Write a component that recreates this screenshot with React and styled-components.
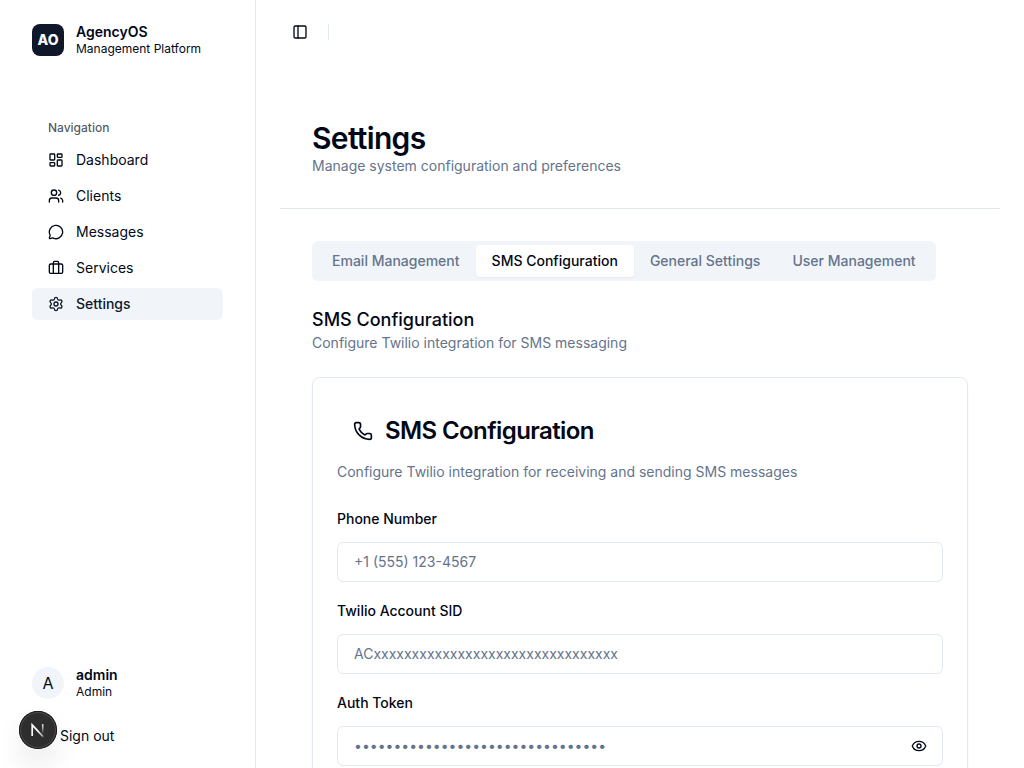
import React from "react";
import styled, { createGlobalStyle } from "styled-components";
import {
  Briefcase,
  Eye,
  LayoutDashboard,
  MessageCircle,
  PanelLeft,
  Phone,
  Settings,
  Users,
} from "lucide-react";

const color = {
  fg: "#020817",
  muted: "#64748b",
  border: "#e2e8f0",
  subtle: "#f1f5f9",
  primary: "#0f172a",
};

const GlobalStyle = createGlobalStyle`
  *, *::before, *::after { box-sizing: border-box; }
  body {
    margin: 0;
    background: #fff;
    color: ${color.fg};
    font-family: Inter, "Liberation Sans", sans-serif;
    font-size: 16px;
    line-height: 24px;
  }
  h1, h2, h3, p { margin: 0; }
  svg { display: block; flex: none; }
  button { font: inherit; color: inherit; background: none; border: 0; padding: 0; }
`;

const Shell = styled.div`
  display: flex;
  height: 100vh;
  overflow: hidden;
`;

const Sidebar = styled.aside`
  flex: 0 0 256px;
  display: flex;
  flex-direction: column;
  border-right: 1px solid ${color.border};
`;

const Identity = styled.div`
  display: flex;
  align-items: center;
  gap: 12px;
`;

const Brand = styled(Identity)`
  padding: 24px 32px 0;
`;

const Logo = styled.div`
  width: 32px;
  height: 32px;
  display: grid;
  place-items: center;
  border-radius: 8px;
  background: ${color.primary};
  color: #f8fafc;
  font-size: 14px;
  line-height: 20px;
  font-weight: 800;
`;

const Avatar = styled.div`
  width: 32px;
  height: 32px;
  display: grid;
  place-items: center;
  border-radius: 50%;
  background: ${color.subtle};
  font-size: 16px;
`;

const Names = styled.div`
  display: flex;
  flex-direction: column;
`;

const Name = styled.span`
  font-size: 14px;
  line-height: 16px;
  font-weight: 600;
`;

const Role = styled.span`
  font-size: 12px;
  line-height: 16px;
  padding-top: 1px;
  margin-bottom: -1px;
`;

const Nav = styled.nav`
  display: flex;
  flex-direction: column;
  gap: 4px;
  padding: 56px 32px 0;
`;

const NavLabel = styled.div`
  height: 32px;
  margin-bottom: -4px;
  padding: 0 16px;
  display: flex;
  align-items: center;
  font-size: 12px;
  font-weight: 500;
  color: rgba(2, 8, 23, 0.7);
`;

const NavItem = styled.a`
  height: 32px;
  padding: 0 16px;
  display: flex;
  align-items: center;
  gap: 12px;
  border-radius: 6px;
  font-size: 14px;
  font-weight: ${(p) => (p.$active ? 500 : 400)};
  color: ${(p) => (p.$active ? color.primary : color.fg)};
  background: ${(p) => (p.$active ? color.subtle : "transparent")};
`;

const SidebarFooter = styled.div`
  margin-top: auto;
  padding: 0 32px 16px;
  display: flex;
  flex-direction: column;
  gap: 20.6px;
`;

const SignOut = styled.button`
  height: 32px;
  padding-left: 28px;
  text-align: left;
  font-size: 14px;
`;

const DevBadge = styled.div`
  position: fixed;
  left: 19px;
  bottom: 19px;
  width: 38px;
  height: 38px;
  display: grid;
  place-items: center;
  border-radius: 50%;
  background: #2e2e2e;
  box-shadow: 0 0 0 1px #171717 inset, 0 0 0 2px rgba(255, 255, 255, 0.14) inset,
    0 16px 32px -8px rgba(0, 0, 0, 0.24);
`;

const Main = styled.main`
  flex: 1;
  min-width: 0;
  padding: 0 24px;
`;

const TopBar = styled.header`
  height: 64px;
  display: flex;
  align-items: center;
  padding-left: 12px;
  gap: 20px;
`;

const Divider = styled.span`
  width: 1px;
  height: 16px;
  background: ${color.border};
`;

const PageHeader = styled.div`
  height: 145px;
  padding: 56px 32px 0;
  border-bottom: 1px solid ${color.border};
`;

const PageTitle = styled.h1`
  font-size: 30px;
  line-height: 36px;
  font-weight: 600;
  letter-spacing: -0.68px;
`;

const Muted = styled.p`
  font-size: 14px;
  line-height: 20px;
  color: ${color.muted};
`;

const Body = styled.div`
  padding: 32px;
`;

const Tabs = styled.div`
  display: inline-flex;
  height: 40px;
  padding: 4px;
  border-radius: 6px;
  background: ${color.subtle};
  vertical-align: top;
`;

const Tab = styled.button`
  padding: 0 16.06px;
  border-radius: 4px;
  font-size: 14px;
  font-weight: 500;
  white-space: nowrap;
  color: ${(p) => (p.$active ? color.fg : color.muted)};
  background: ${(p) => (p.$active ? "#fff" : "transparent")};
  box-shadow: ${(p) => (p.$active ? "0 1px 2px rgba(0, 0, 0, 0.05)" : "none")};
`;

const SectionTitle = styled.h2`
  margin-top: 25px;
  font-size: 18px;
  line-height: 28px;
  font-weight: 500;
`;

const SectionNote = styled(Muted)`
  margin-top: -1px;
`;

const Card = styled.section`
  height: 700px;
  margin-top: 24px;
  padding: 36px 24px;
  border: 1px solid ${color.border};
  border-radius: 8px;
  box-shadow: 0 1px 2px rgba(0, 0, 0, 0.05);
`;

const CardTitle = styled.h3`
  display: flex;
  align-items: center;
  gap: 12px;
  height: 34px;
  padding-left: 16px;
  margin-bottom: 14px;
  font-size: 24px;
  line-height: 24px;
  font-weight: 600;
  letter-spacing: -0.6px;
`;

const Form = styled.div`
  display: flex;
  flex-direction: column;
  gap: 20px;
  margin-top: 28px;
`;

const Field = styled.label`
  display: flex;
  flex-direction: column;
  gap: 14px;
  font-size: 14px;
  line-height: 18px;
  font-weight: 500;
`;

const InputBox = styled.span`
  display: flex;
  align-items: center;
  height: 40px;
  padding: 0 15px 0 16px;
  border: 1px solid ${color.border};
  border-radius: 6px;
  background: #fff;
`;

const Input = styled.input`
  flex: 1;
  min-width: 0;
  height: 20px;
  padding: 0;
  border: 0;
  outline: 0;
  background: none;
  font: 400 14px/20px Inter, "Liberation Sans", sans-serif;
  color: ${color.fg};
  &::placeholder { color: ${color.muted}; opacity: 1; }
`;

const NextMark = () => (
  <svg width="38" height="38" viewBox="0 0 38 38" fill="none">
    <defs>
      <linearGradient id="nDiagonal" x1="20" y1="19" x2="25.5" y2="26" gradientUnits="userSpaceOnUse">
        <stop stopColor="#fff" />
        <stop offset="0.7" stopColor="#fff" stopOpacity="0.6" />
        <stop offset="1" stopColor="#fff" stopOpacity="0" />
      </linearGradient>
      <linearGradient id="nStem" x1="0" y1="13" x2="0" y2="23" gradientUnits="userSpaceOnUse">
        <stop stopColor="#fff" />
        <stop offset="1" stopColor="#fff" stopOpacity="0" />
      </linearGradient>
    </defs>
    <path d="M13.2 25V14L24.7 26.3" stroke="url(#nDiagonal)" strokeWidth="1.7" />
    <path d="M23.7 13.2V23" stroke="url(#nStem)" strokeWidth="1.5" />
  </svg>
);

const links = [
  ["Dashboard", LayoutDashboard],
  ["Clients", Users],
  ["Messages", MessageCircle],
  ["Services", Briefcase],
  ["Settings", Settings],
];

const tabs = ["Email Management", "SMS Configuration", "General Settings", "User Management"];

const fields = [
  { label: "Phone Number", placeholder: "+1 (555) 123-4567" },
  { label: "Twilio Account SID", placeholder: "AC" + "x".repeat(32) },
  { label: "Auth Token", placeholder: "•".repeat(32), secret: true },
];

export default function App() {
  return (
    <>
      <GlobalStyle />
      <Shell>
        <Sidebar>
          <Brand>
            <Logo>AO</Logo>
            <Names>
              <Name>AgencyOS</Name>
              <Role>Management Platform</Role>
            </Names>
          </Brand>
          <Nav>
            <NavLabel>Navigation</NavLabel>
            {links.map(([label, LinkIcon]) => (
              <NavItem key={label} $active={label === "Settings"}>
                <LinkIcon size={16} />
                {label}
              </NavItem>
            ))}
          </Nav>
          <SidebarFooter>
            <Identity>
              <Avatar>A</Avatar>
              <Names>
                <Name>admin</Name>
                <Role>Admin</Role>
              </Names>
            </Identity>
            <SignOut>Sign out</SignOut>
          </SidebarFooter>
        </Sidebar>
        <Main>
          <TopBar>
            <PanelLeft size={16} />
            <Divider />
          </TopBar>
          <PageHeader>
            <PageTitle>Settings</PageTitle>
            <Muted>Manage system configuration and preferences</Muted>
          </PageHeader>
          <Body>
            <Tabs>
              {tabs.map((t) => (
                <Tab key={t} $active={t === "SMS Configuration"}>{t}</Tab>
              ))}
            </Tabs>
            <SectionTitle>SMS Configuration</SectionTitle>
            <SectionNote>Configure Twilio integration for SMS messaging</SectionNote>
            <Card>
              <CardTitle>
                <Phone size={20} />
                SMS Configuration
              </CardTitle>
              <Muted>Configure Twilio integration for receiving and sending SMS messages</Muted>
              <Form>
                {fields.map((f) => (
                  <Field key={f.label}>
                    {f.label}
                    <InputBox>
                      <Input placeholder={f.placeholder} />
                      {f.secret && <Eye size={16} />}
                    </InputBox>
                  </Field>
                ))}
              </Form>
            </Card>
          </Body>
        </Main>
      </Shell>
      <DevBadge><NextMark /></DevBadge>
    </>
  );
}
